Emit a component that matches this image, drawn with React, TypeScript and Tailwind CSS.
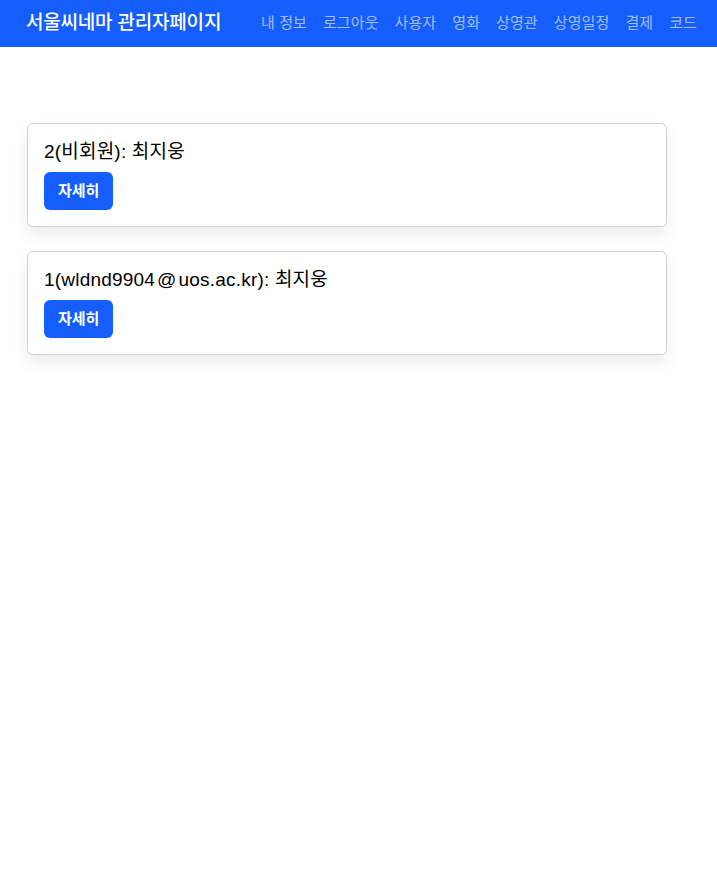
const users = [
  { id: 2, label: "비회원", name: "최지웅" },
  { id: 1, label: "wldnd9904@uos.ac.kr", name: "최지웅" },
];

const links = ["내 정보", "로그아웃", "사용자", "영화", "상영관", "상영일정", "결제", "코드"];

function Label({ text }: { text: string }) {
  // the @ sits wider in the original, give it a bit of room
  const at = text.indexOf("@");
  if (at < 0) return <>{text}</>;
  return (
    <>
      {text.slice(0, at)}
      <span className="mx-[2px]">@</span>
      {text.slice(at + 1)}
    </>
  );
}

export default function App() {
  return (
    <div
      className="min-h-screen bg-white text-black"
      style={{ fontFamily: '"Liberation Sans", "Noto Sans CJK KR", sans-serif' }}
    >
      <nav className="flex h-[47px] items-center justify-between bg-[#155efb] pl-[26px] pr-[12px]">
        <a className="text-[19px] font-medium tracking-[-0.2px] text-white">서울씨네마 관리자페이지</a>
        <div className="flex">
          {links.map((l) => (
            <a key={l} className="px-[8px] text-[15px] tracking-[0.1px] text-white/60">
              {l}
            </a>
          ))}
        </div>
      </nav>

      <main className="ml-[27px] mt-[76px] flex w-[640px] flex-col gap-[24px]">
        {users.map((u) => (
          <section
            key={u.id}
            className="rounded-[6px] border border-[#d2d2d2] bg-white px-[16px] pb-[16px] pt-[15px] shadow-[0_8px_16px_rgba(0,0,0,0.08)]"
          >
            <p className="text-[19px] leading-[26px] tracking-[0.2px]">
              {u.id}(<Label text={u.label} />): {u.name}
            </p>
            <button
              type="button"
              className="mt-[7px] h-[38px] rounded-[6px] bg-[#155efb] px-[14px] text-[15px] font-bold text-white"
            >
              자세히
            </button>
          </section>
        ))}
      </main>
    </div>
  );
}
